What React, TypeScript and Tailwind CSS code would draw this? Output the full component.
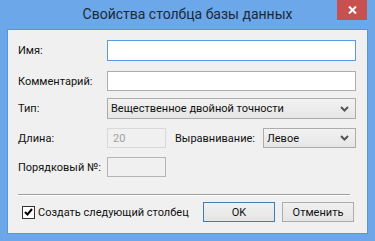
import React from "react"

const font = { fontFamily: '"Segoe UI", Roboto, "Noto Sans", sans-serif' }

function Chevron() {
  return (
    <svg width="9" height="6" viewBox="0 0 9 6" className="shrink-0">
      <path d="M1 1 L4.5 4.5 L8 1" fill="none" stroke="#555" strokeWidth="2" />
    </svg>
  )
}

function Select({ value, className }: { value: string; className: string }) {
  return (
    <div
      className={`flex items-center justify-between border border-[#acacac] bg-gradient-to-b from-[#f2f2f2] to-[#e6e6e6] pl-[3px] pr-[6px] ${className}`}
    >
      <span className="whitespace-nowrap">{value}</span>
      <Chevron />
    </div>
  )
}

export default function App() {
  return (
    <div
      className="w-[375px] h-[241px] bg-[#6ba7e9] flex flex-col px-[7px] pb-[7px] text-[11px] text-[#111] leading-none whitespace-nowrap"
      style={font}
    >
      {/* title bar */}
      <div className="h-[29px] relative flex items-center justify-center">
        <span className="text-[14px] text-[#1b2a3a] -mt-[1px]">Свойства столбца базы данных</span>
        <div className="absolute right-[1px] top-0 w-[30px] h-[20px] bg-[#c75050] flex items-center justify-center">
          <svg width="9" height="8" viewBox="0 0 9 8">
            <path d="M1 0.5 L8 7.5 M8 0.5 L1 7.5" stroke="#fff" strokeWidth="2" />
          </svg>
        </div>
      </div>

      {/* client area */}
      <div className="flex-1 border border-[#5b93d6] bg-[#f0f0f0] flex flex-col pl-[10px] pr-[11px]">
        <div className="flex items-center mt-[10px] h-[21px]">
          <span className="w-[89px] shrink-0">Имя:</span>
          <div className="flex-1 h-full border border-[#569de5] bg-white" />
        </div>

        <div className="flex items-center mt-[10px] h-[20px]">
          <span className="w-[89px] shrink-0">Комментарий:</span>
          <div className="flex-1 h-full border border-[#abadb3] bg-white" />
        </div>

        <div className="flex items-center mt-[7px] h-[21px]">
          <span className="w-[89px] shrink-0">Тип:</span>
          <Select value="Вещественное двойной точности" className="flex-1 h-full" />
        </div>

        <div className="flex items-center mt-[9px] h-[20px]">
          <span className="w-[89px] shrink-0">Длина:</span>
          <div className="w-[59px] shrink-0 h-full border border-[#d9d9d9] bg-[#f0f0f0] flex items-center pl-[5px] text-[#a0a0a0]">
            20
          </div>
          <span className="ml-[9px] w-[88px] shrink-0">Выравнивание:</span>
          <Select value="Левое" className="flex-1 h-full" />
        </div>

        <div className="flex items-center mt-[9px] h-[20px]">
          <span className="w-[89px] shrink-0">Порядковый №:</span>
          <div className="w-[59px] h-full border border-[#b5b5b5] bg-[#f0f0f0]" />
        </div>

        <div className="mt-[17px] mr-[6px] h-[2px] border-t border-[#a0a0a0] border-b border-b-white" />

        <div className="flex items-center mt-[6px] h-[20px]">
          <div className="ml-[4px] w-[13px] h-[13px] border border-[#333] bg-white flex items-center justify-center">
            <svg width="9" height="8" viewBox="0 0 9 8">
              <path d="M1 4 L3.5 6.5 L8 1" fill="none" stroke="#000" strokeWidth="2" />
            </svg>
          </div>
          <span className="ml-[3px]">Создать следующий столбец</span>
          <div className="ml-auto flex gap-[7px] mr-[2px] h-full">
            <div className="w-[72px] h-full border border-[#3c7fb1] bg-gradient-to-b from-[#f0f0f0] to-[#e5e5e5] flex items-center justify-center">
              OK
            </div>
            <div className="w-[72px] h-full border border-[#acacac] bg-gradient-to-b from-[#f0f0f0] to-[#e5e5e5] flex items-center justify-center">
              Отменить
            </div>
          </div>
        </div>
      </div>
    </div>
  )
}
